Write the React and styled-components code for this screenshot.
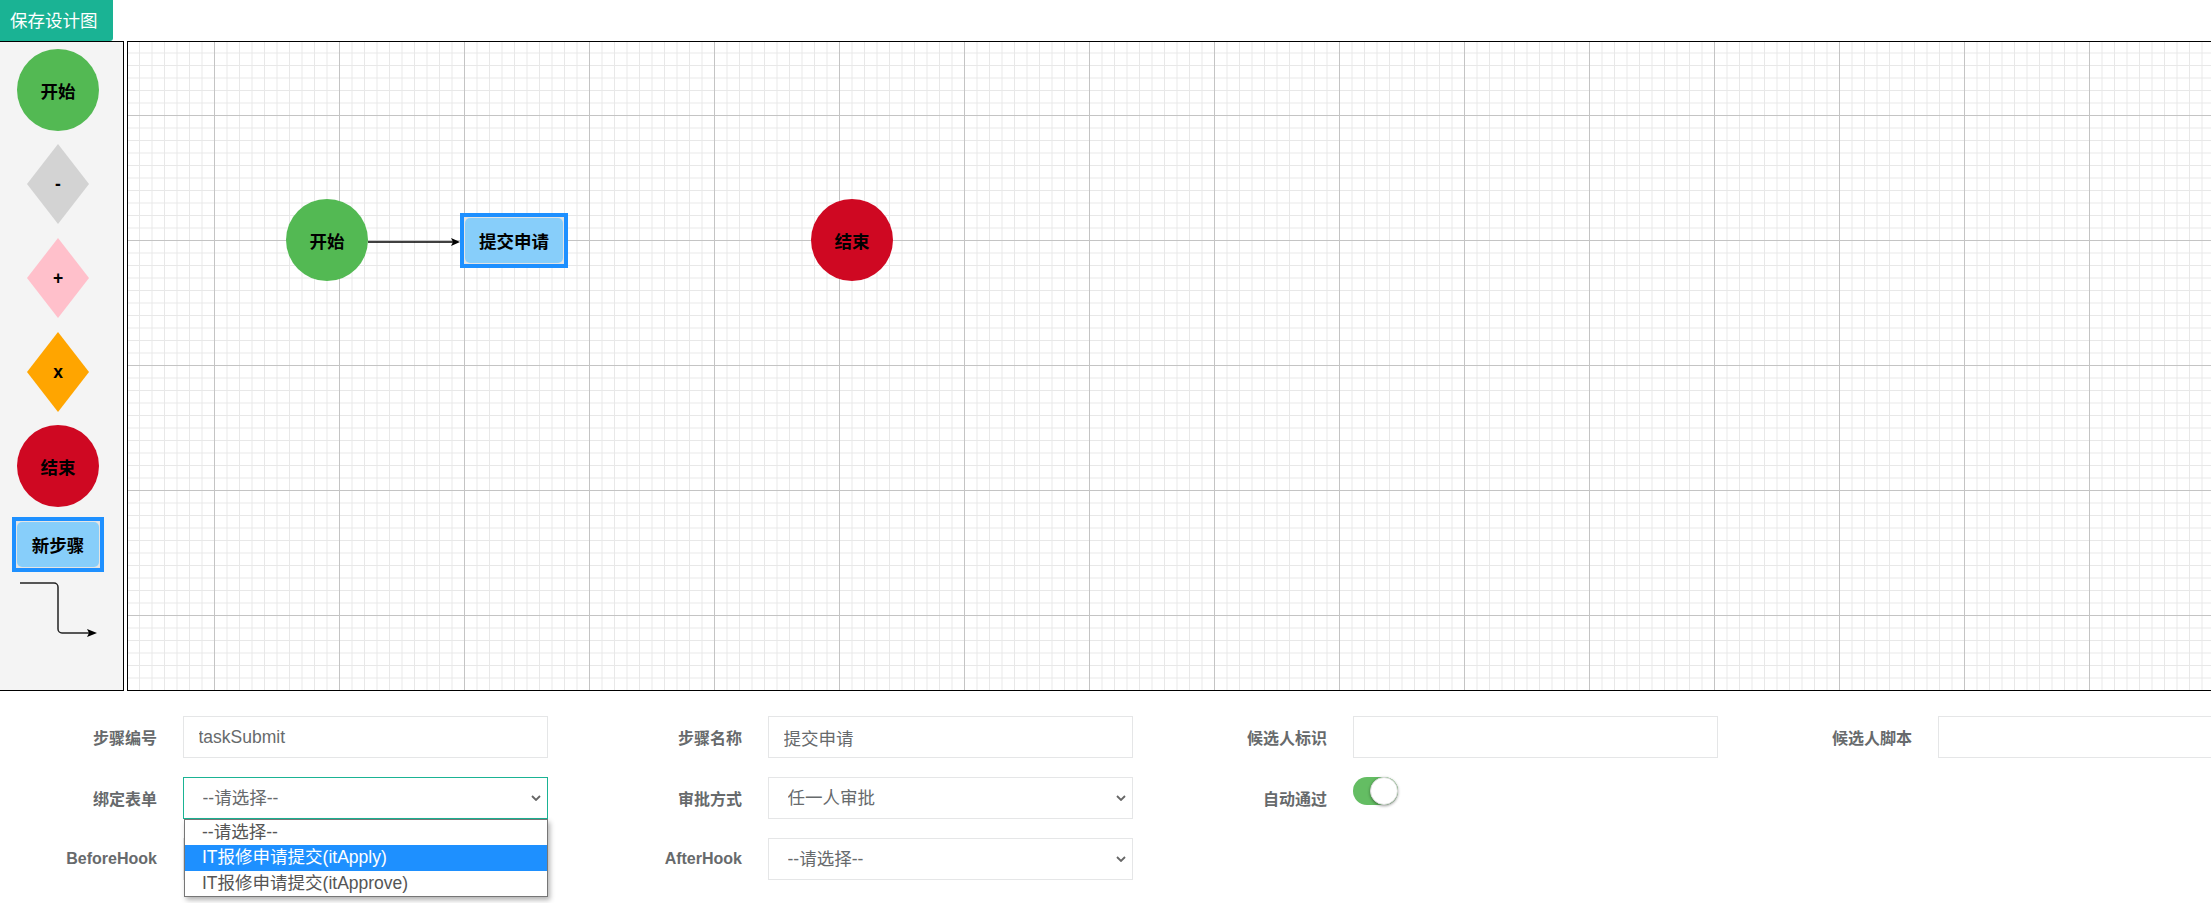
import React from "react";
import styled, { createGlobalStyle } from "styled-components";

const GlobalStyle = createGlobalStyle`
  html, body {
    margin: 0;
    padding: 0;
    background: #fff;
    overflow: hidden;
  }
  body {
    font-family: "Liberation Sans", Arial, "Noto Sans CJK SC", sans-serif;
  }
  * {
    box-sizing: border-box;
  }
`;

const Page = styled.div`
  width: 2211px;
  height: 903px;
  overflow: hidden;
  display: flex;
  flex-direction: column;
`;

const Toolbar = styled.div`
  height: 41px;
  flex: none;
  display: flex;
`;

const SaveButton = styled.button`
  height: 41px;
  width: 113px;
  padding: 0 0 3px 10px;
  text-align: left;
  border: none;
  border-radius: 0 0 3px 0;
  background: #1ab394;
  color: #fff;
  font-family: inherit;
  font-size: 17.5px;
  cursor: pointer;
`;

const Workspace = styled.div`
  display: flex;
  gap: 3px;
  height: 650px;
  flex: none;
`;

const Palette = styled.div`
  width: 124px;
  flex: none;
  background: #f4f4f4;
  border: 1px solid #000;
  border-left: none;
  display: flex;
  flex-direction: column;
  align-items: center;
  padding: 7px 7px 0 0;
`;

const PaletteItem = styled.div`
  margin-top: ${(p) => p.$mt}px;
  display: flex;
`;

const Canvas = styled.div`
  position: relative;
  flex: none;
  width: 2200px;
  border: 1px solid #000;
  background-color: #fff;
  background-image:
    linear-gradient(to right, #c4c4c4 1px, transparent 1px),
    linear-gradient(to bottom, #c4c4c4 1px, transparent 1px),
    linear-gradient(to right, #e8e8e8 1px, transparent 1px),
    linear-gradient(to bottom, #e8e8e8 1px, transparent 1px);
  background-size: 125px 125px, 125px 125px, 12.5px 12.5px, 12.5px 12.5px;
  background-position: 86px 73px;
`;

const Placed = styled.div`
  position: absolute;
  left: ${(p) => p.$x}px;
  top: ${(p) => p.$y}px;
`;

const Circle = styled.div`
  width: 82px;
  height: 82px;
  border-radius: 50%;
  background: ${(p) => p.$color};
  display: flex;
  align-items: center;
  justify-content: center;
  font-weight: 700;
  font-size: 17.5px;
  color: #000;
  flex: none;
`;

const Diamond = styled.div`
  width: 62px;
  height: 80px;
  clip-path: polygon(50% 0, 100% 50%, 50% 100%, 0 50%);
  background: ${(p) => p.$color};
  display: flex;
  align-items: center;
  justify-content: center;
  font-weight: 700;
  font-size: 17.5px;
  color: #000;
`;

const StepBox = styled.div`
  width: ${(p) => p.$w}px;
  height: 55px;
  border: 4px solid #1e90ff;
  padding: 1px;
  background: #e4e4e4;
`;

const StepInner = styled.div`
  height: 100%;
  border-radius: 5px;
  background: #87cefa;
  display: flex;
  align-items: center;
  justify-content: center;
  font-weight: 700;
  font-size: 17.5px;
  color: #000;
`;

const Form = styled.div`
  display: grid;
  grid-template-columns: repeat(4, 585px);
  row-gap: 19px;
  padding-top: 25px;
`;

const Field = styled.div`
  position: relative;
  display: flex;
  align-items: center;
  min-height: 42px;
`;

const Label = styled.label`
  width: 157px;
  flex: none;
  margin-right: 25.5px;
  text-align: right;
  font-weight: 700;
  font-size: 16px;
  color: #676a6c;
`;

const TextInput = styled.input`
  width: 365px;
  height: 42px;
  flex: none;
  border: 1px solid #e5e6e7;
  padding: 0 15px;
  font-family: inherit;
  font-size: 17.5px;
  color: #676a6c;
  background: #fff;
  outline: none;
`;

const SelectBox = styled.div`
  position: relative;
  width: 365px;
  height: 42px;
  flex: none;
`;

const Select = styled.select`
  appearance: none;
  width: 100%;
  height: 100%;
  border: 1px solid ${(p) => (p.$focused ? "#1ab394" : "#e5e6e7")};
  padding: 0 30px 0 19px;
  font-family: inherit;
  font-size: 17.5px;
  color: #676a6c;
  background: #fff;
  outline: none;
`;

const Chevron = styled.svg`
  position: absolute;
  right: 7px;
  top: 50%;
  margin-top: -3px;
  pointer-events: none;
`;

const OptionList = styled.div`
  position: absolute;
  top: 100%;
  left: 1.5px;
  right: 0;
  z-index: 10;
  background: #fff;
  border: 1px solid #767676;
  box-shadow: 2px 3px 5px rgba(0, 0, 0, 0.3);
`;

const OptionRow = styled.div`
  height: 25.4px;
  line-height: 25.4px;
  padding-left: 17px;
  font-size: 17.5px;
  white-space: nowrap;
  color: ${(p) => (p.$active ? "#fff" : "#555")};
  background: ${(p) => (p.$active ? "#1e90ff" : "transparent")};
`;

const Switch = styled.div`
  position: relative;
  align-self: flex-start;
  flex: none;
  width: 45px;
  height: 28px;
  border-radius: 14px;
  background: #64bd63;
`;

const Knob = styled.span`
  position: absolute;
  right: 0;
  top: 0;
  width: 28px;
  height: 28px;
  border-radius: 50%;
  background: #fff;
  border: 1px solid #dcdcdc;
  box-shadow: 0 1px 3px rgba(0, 0, 0, 0.4);
`;

const ChevronIcon = () => (
  <Chevron width="10" height="6" viewBox="0 0 10 6">
    <path d="M1 1 L5 5 L9 1" fill="none" stroke="#666" strokeWidth="1.8" />
  </Chevron>
);

const Dropdown = ({ value, focused, options, open }) => (
  <SelectBox>
    <Select $focused={focused} defaultValue={value}>
      <option>{value}</option>
    </Select>
    <ChevronIcon />
    {open && (
      <OptionList>
        {options.map((o, i) => (
          <OptionRow key={o} $active={i === 1}>
            {o}
          </OptionRow>
        ))}
      </OptionList>
    )}
  </SelectBox>
);

const ConnectorIcon = () => (
  <svg width="82" height="58" viewBox="0 0 82 58">
    <path
      d="M3 2 H37 A4 4 0 0 1 41 6 V48 A4 4 0 0 0 45 52 H73"
      fill="none"
      stroke="#222"
      strokeWidth="1.5"
    />
    <polygon points="70,48 80,52 70,56 72,52" fill="#000" />
  </svg>
);

const formOptions = [
  "--请选择--",
  "IT报修申请提交(itApply)",
  "IT报修申请提交(itApprove)",
];

const App = () => {
  return (
    <Page>
      <GlobalStyle />
      <Toolbar>
        <SaveButton>保存设计图</SaveButton>
      </Toolbar>
      <Workspace>
        <Palette>
          <PaletteItem $mt={0}>
            <Circle $color="#53b953">开始</Circle>
          </PaletteItem>
          <PaletteItem $mt={13}>
            <Diamond $color="#d3d3d3">-</Diamond>
          </PaletteItem>
          <PaletteItem $mt={14}>
            <Diamond $color="#ffc0cb">+</Diamond>
          </PaletteItem>
          <PaletteItem $mt={14}>
            <Diamond $color="#ffa500">x</Diamond>
          </PaletteItem>
          <PaletteItem $mt={13}>
            <Circle $color="#cf0822">结束</Circle>
          </PaletteItem>
          <PaletteItem $mt={10}>
            <StepBox $w={92}>
              <StepInner>新步骤</StepInner>
            </StepBox>
          </PaletteItem>
          <PaletteItem $mt={9}>
            <ConnectorIcon />
          </PaletteItem>
        </Palette>
        <Canvas>
          <Placed $x={158} $y={157}>
            <Circle $color="#53b953">开始</Circle>
          </Placed>
          <Placed $x={239} $y={192}>
            <svg width="94" height="12" viewBox="0 0 94 12">
              <line x1="1" y1="6" x2="87" y2="6" stroke="#000" strokeWidth="1.5" />
              <polygon points="84,2 93,6 84,10 86,6" fill="#000" />
            </svg>
          </Placed>
          <Placed $x={332} $y={171}>
            <StepBox $w={108}>
              <StepInner>提交申请</StepInner>
            </StepBox>
          </Placed>
          <Placed $x={683} $y={157}>
            <Circle $color="#cf0822">结束</Circle>
          </Placed>
        </Canvas>
      </Workspace>
      <Form>
        <Field>
          <Label>步骤编号</Label>
          <TextInput defaultValue="taskSubmit" />
        </Field>
        <Field>
          <Label>步骤名称</Label>
          <TextInput defaultValue="提交申请" />
        </Field>
        <Field>
          <Label>候选人标识</Label>
          <TextInput defaultValue="" />
        </Field>
        <Field>
          <Label>候选人脚本</Label>
          <TextInput defaultValue="" />
        </Field>

        <Field>
          <Label>绑定表单</Label>
          <Dropdown value="--请选择--" focused open options={formOptions} />
        </Field>
        <Field>
          <Label>审批方式</Label>
          <Dropdown value="任一人审批" />
        </Field>
        <Field>
          <Label>自动通过</Label>
          <Switch>
            <Knob />
          </Switch>
        </Field>
        <div />

        <Field>
          <Label>BeforeHook</Label>
          <Dropdown value="--请选择--" />
        </Field>
        <Field>
          <Label>AfterHook</Label>
          <Dropdown value="--请选择--" />
        </Field>
      </Form>
    </Page>
  );
};

export default App;
